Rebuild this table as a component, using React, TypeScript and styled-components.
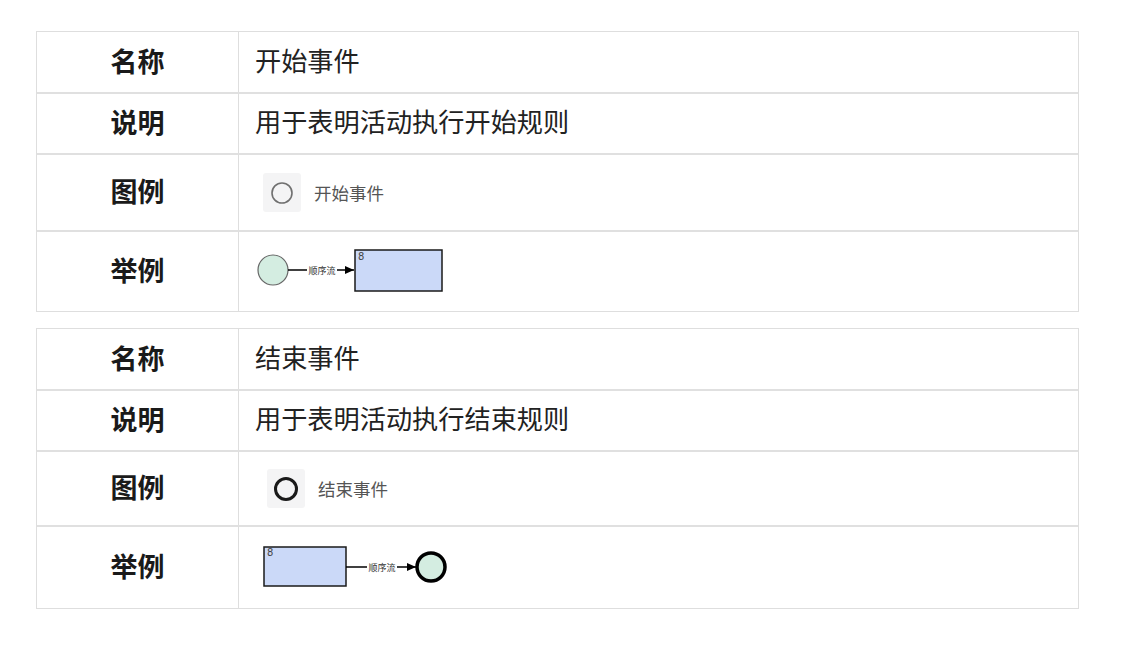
import React from "react";
import styled, { createGlobalStyle } from "styled-components";

const Global = createGlobalStyle`
  html, body { margin: 0; padding: 0; background: #fff; }
  body { font-family: "Noto Sans CJK SC", "Noto Sans", sans-serif; color: #222; }
`;

const Page = styled.div`
  display: flex;
  flex-direction: column;
  gap: 16px;
  padding: 31px 55px 0 36px;
  width: 1043px;
`;

const Table = styled.div`
  display: grid;
  grid-template-columns: 202px 1fr;
  border: 1px solid #dedede;
`;

const HeadCell = styled.div<{ $h: number; $first?: boolean }>`
  height: ${(p) => p.$h}px;
  box-sizing: border-box;
  display: flex;
  align-items: center;
  justify-content: center;
  padding-bottom: 4px;
  font-size: 27px;
  line-height: 1;
  font-weight: 700;
  color: #1a1a1a;
  border-right: 1px solid #dedede;
  border-top: ${(p) => (p.$first ? "none" : "2px solid #e0e0e0")};
`;

const BodyCell = styled.div<{ $h: number; $first?: boolean; $pl?: number; $pb?: number }>`
  height: ${(p) => p.$h}px;
  box-sizing: border-box;
  display: flex;
  align-items: center;
  padding-left: ${(p) => p.$pl ?? 16}px;
  padding-bottom: ${(p) => p.$pb ?? 4}px;
  font-size: 26.2px;
  line-height: 1;
  color: #222;
  border-top: ${(p) => (p.$first ? "none" : "2px solid #e0e0e0")};
`;

const Legend = styled.div`
  display: flex;
  align-items: center;
  gap: 13px;
`;

const IconBox = styled.div`
  width: 38px;
  height: 39px;
  background: #f4f4f5;
  border-radius: 3px;
  display: flex;
  align-items: center;
  justify-content: center;
`;

const LegendText = styled.span`
  font-size: 17.5px;
  color: #555;
`;

const StartExample = () => (
  <svg width="200" height="50" viewBox="0 0 200 50">
    <defs>
      <marker id="a1" markerWidth="10" markerHeight="10" refX="9" refY="5" orient="auto" markerUnits="userSpaceOnUse">
        <path d="M0,1 L9,5 L0,9 Z" fill="#000" />
      </marker>
    </defs>
    <circle cx="19" cy="25" r="15" fill="#d4ede1" stroke="#666" strokeWidth="1.2" />
    <line x1="34" y1="25" x2="100" y2="25" stroke="#000" strokeWidth="1.3" markerEnd="url(#a1)" />
    <rect x="53" y="19" width="30" height="12" fill="#fff" />
    <text x="68" y="28.5" fontSize="9" textAnchor="middle" fill="#333" fontFamily="Noto Sans CJK SC, sans-serif">顺序流</text>
    <rect x="101" y="5" width="87" height="41" fill="#cbd9f8" stroke="#1a1a1a" strokeWidth="1.5" />
    <text x="104" y="15" fontSize="10" fill="#444" fontFamily="DejaVu Sans, sans-serif">8</text>
  </svg>
);

const EndExample = () => (
  <svg width="200" height="50" viewBox="0 0 200 50">
    <defs>
      <marker id="a2" markerWidth="10" markerHeight="10" refX="9" refY="5" orient="auto" markerUnits="userSpaceOnUse">
        <path d="M0,1 L9,5 L0,9 Z" fill="#000" />
      </marker>
    </defs>
    <rect x="9" y="6" width="82" height="39" fill="#cbd9f8" stroke="#1a1a1a" strokeWidth="1.5" />
    <text x="12" y="15" fontSize="10" fill="#444" fontFamily="DejaVu Sans, sans-serif">8</text>
    <line x1="91" y1="26" x2="161" y2="26" stroke="#000" strokeWidth="1.3" markerEnd="url(#a2)" />
    <rect x="112" y="20" width="30" height="12" fill="#fff" />
    <text x="127" y="29.5" fontSize="9" textAnchor="middle" fill="#333" fontFamily="Noto Sans CJK SC, sans-serif">顺序流</text>
    <circle cx="176" cy="26" r="14" fill="#d4ede1" stroke="#000" strokeWidth="3.5" />
  </svg>
);

type Spec = {
  name: string;
  desc: string;
  legendLabel: string;
  legendIcon: React.ReactNode;
  legendPl: number;
  example: React.ReactNode;
  exPl: number;
  heights: number[];
};

const specs: Spec[] = [
  {
    name: "开始事件",
    desc: "用于表明活动执行开始规则",
    legendLabel: "开始事件",
    legendIcon: (
      <svg width="24" height="24" viewBox="0 0 24 24">
        <circle cx="12" cy="12" r="10" fill="none" stroke="#707070" strokeWidth="1.6" />
      </svg>
    ),
    legendPl: 24,
    example: <StartExample />,
    exPl: 15,
    heights: [60, 61, 77, 81],
  },
  {
    name: "结束事件",
    desc: "用于表明活动执行结束规则",
    legendLabel: "结束事件",
    legendIcon: (
      <svg width="26" height="26" viewBox="0 0 26 26">
        <circle cx="13" cy="13" r="10.5" fill="none" stroke="#1a1a1a" strokeWidth="3" />
      </svg>
    ),
    legendPl: 28,
    example: <EndExample />,
    exPl: 16,
    heights: [60, 61, 75, 83],
  },
];

const EventTable = ({ s }: { s: Spec }) => (
  <Table>
    <HeadCell $h={s.heights[0]} $first>名称</HeadCell>
    <BodyCell $h={s.heights[0]} $first>{s.name}</BodyCell>
    <HeadCell $h={s.heights[1]}>说明</HeadCell>
    <BodyCell $h={s.heights[1]}>{s.desc}</BodyCell>
    <HeadCell $h={s.heights[2]}>图例</HeadCell>
    <BodyCell $h={s.heights[2]} $pl={s.legendPl} $pb={0}>
      <Legend>
        <IconBox>{s.legendIcon}</IconBox>
        <LegendText>{s.legendLabel}</LegendText>
      </Legend>
    </BodyCell>
    <HeadCell $h={s.heights[3]}>举例</HeadCell>
    <BodyCell $h={s.heights[3]} $pl={s.exPl} $pb={4}>{s.example}</BodyCell>
  </Table>
);

export default function App() {
  return (
    <>
      <Global />
      <Page>
        {specs.map((s) => (
          <EventTable key={s.name} s={s} />
        ))}
      </Page>
    </>
  );
}
